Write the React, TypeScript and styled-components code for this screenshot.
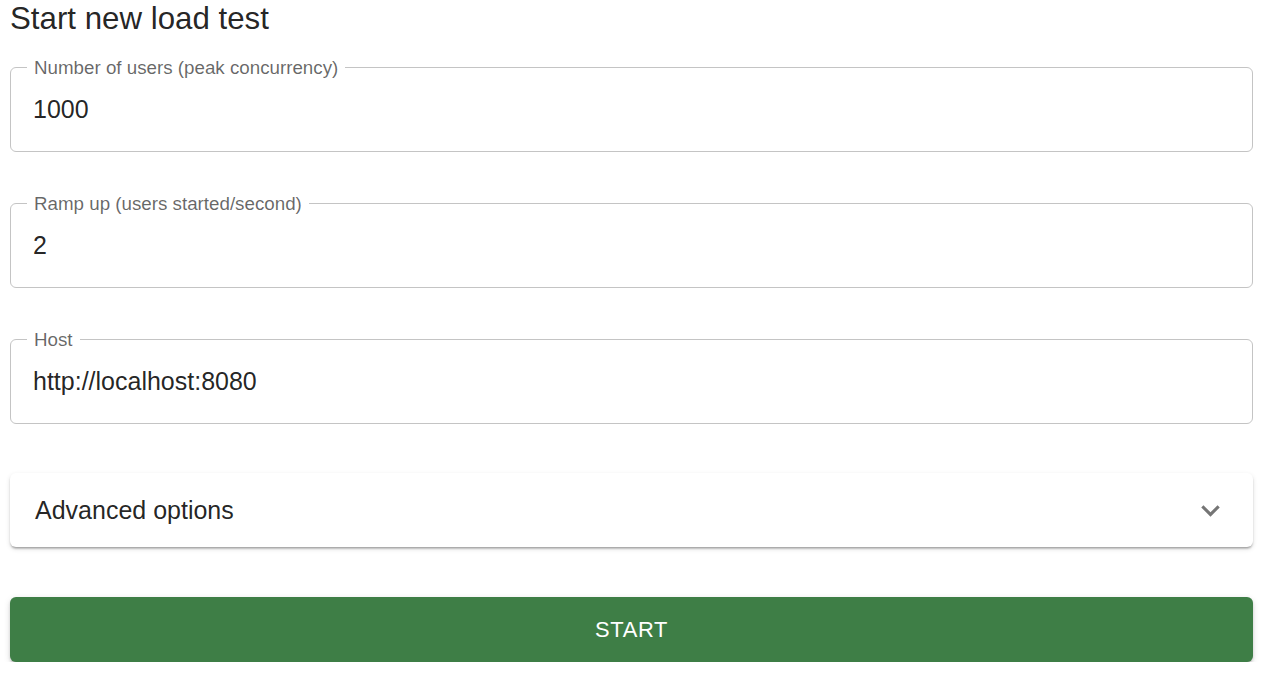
import styled, { createGlobalStyle } from "styled-components";

const GlobalStyle = createGlobalStyle`
  body {
    margin: 0;
    background: #ffffff;
    font-family: "Liberation Sans", Arial, sans-serif;
    color: rgba(0, 0, 0, 0.87);
  }
`;

interface FieldDef {
  label: string;
  value: string;
}

const fields: FieldDef[] = [
  { label: "Number of users (peak concurrency)", value: "1000" },
  { label: "Ramp up (users started/second)", value: "2" },
  { label: "Host", value: "http://localhost:8080" },
];

const App = () => {
  return (
    <>
      <GlobalStyle />
      <Page>
        <Title>Start new load test</Title>
        <Form>
          {fields.map((f) => (
            <Field key={f.label}>
              <Label>{f.label}</Label>
              <Input defaultValue={f.value} />
            </Field>
          ))}
          <Accordion>
            <Summary>
              <span>Advanced options</span>
              <svg width="37" height="37" viewBox="0 0 24 24" fill="#757575">
                <path d="M16.59 8.59 12 13.17 7.41 8.59 6 10l6 6 6-6z" />
              </svg>
            </Summary>
          </Accordion>
          <StartButton>Start</StartButton>
        </Form>
      </Page>
    </>
  );
};

export default App;

const Page = styled.main`
  padding: 0 25px 0 10px;
`;

const Title = styled.h1`
  margin: 0;
  font-size: 31.25px;
  font-weight: 400;
  line-height: 38px;
  color: rgba(0, 0, 0, 0.87);
`;

const Form = styled.div`
  display: flex;
  flex-direction: column;
  margin-top: 29px;
`;

const Field = styled.div`
  position: relative;
  box-sizing: border-box;
  height: 85px;
  border: 1px solid #c4c4c4;
  border-radius: 6px;
  display: flex;
  align-items: center;
  padding: 0 22px;
  margin-bottom: 51px;
`;

const Label = styled.label`
  position: absolute;
  top: -11px;
  left: 16px;
  padding: 0 7px;
  background: #ffffff;
  font-size: 18.75px;
  line-height: 22px;
  color: rgba(0, 0, 0, 0.6);
  white-space: nowrap;
`;

const Input = styled.input`
  flex: 1;
  border: none;
  outline: none;
  padding: 0;
  background: transparent;
  font-family: inherit;
  font-size: 25px;
  color: rgba(0, 0, 0, 0.87);
`;

const Accordion = styled.section`
  margin-top: -2px;
  border-radius: 6px;
  background: #ffffff;
  box-shadow: 0px 3px 2px -2px rgba(0, 0, 0, 0.2), 0px 2px 2px 0px rgba(0, 0, 0, 0.14),
    0px 2px 5px 0px rgba(0, 0, 0, 0.12);
`;

const Summary = styled.div`
  height: 74px;
  display: flex;
  align-items: center;
  justify-content: space-between;
  padding: 0 24px 0 25px;
  font-size: 25px;
  color: rgba(0, 0, 0, 0.87);
  & > svg {
    display: block;
  }
`;

const StartButton = styled.button`
  margin-top: 50px;
  height: 65px;
  border: none;
  border-radius: 6px;
  background: #3e7e46;
  color: #ffffff;
  font-family: inherit;
  font-size: 21.9px;
  font-weight: 400;
  letter-spacing: 0.63px;
  text-transform: uppercase;
  cursor: pointer;
  box-shadow: 0px 3px 2px -2px rgba(0, 0, 0, 0.2), 0px 2px 3px 0px rgba(0, 0, 0, 0.14),
    0px 2px 7px 0px rgba(0, 0, 0, 0.12);
`;
